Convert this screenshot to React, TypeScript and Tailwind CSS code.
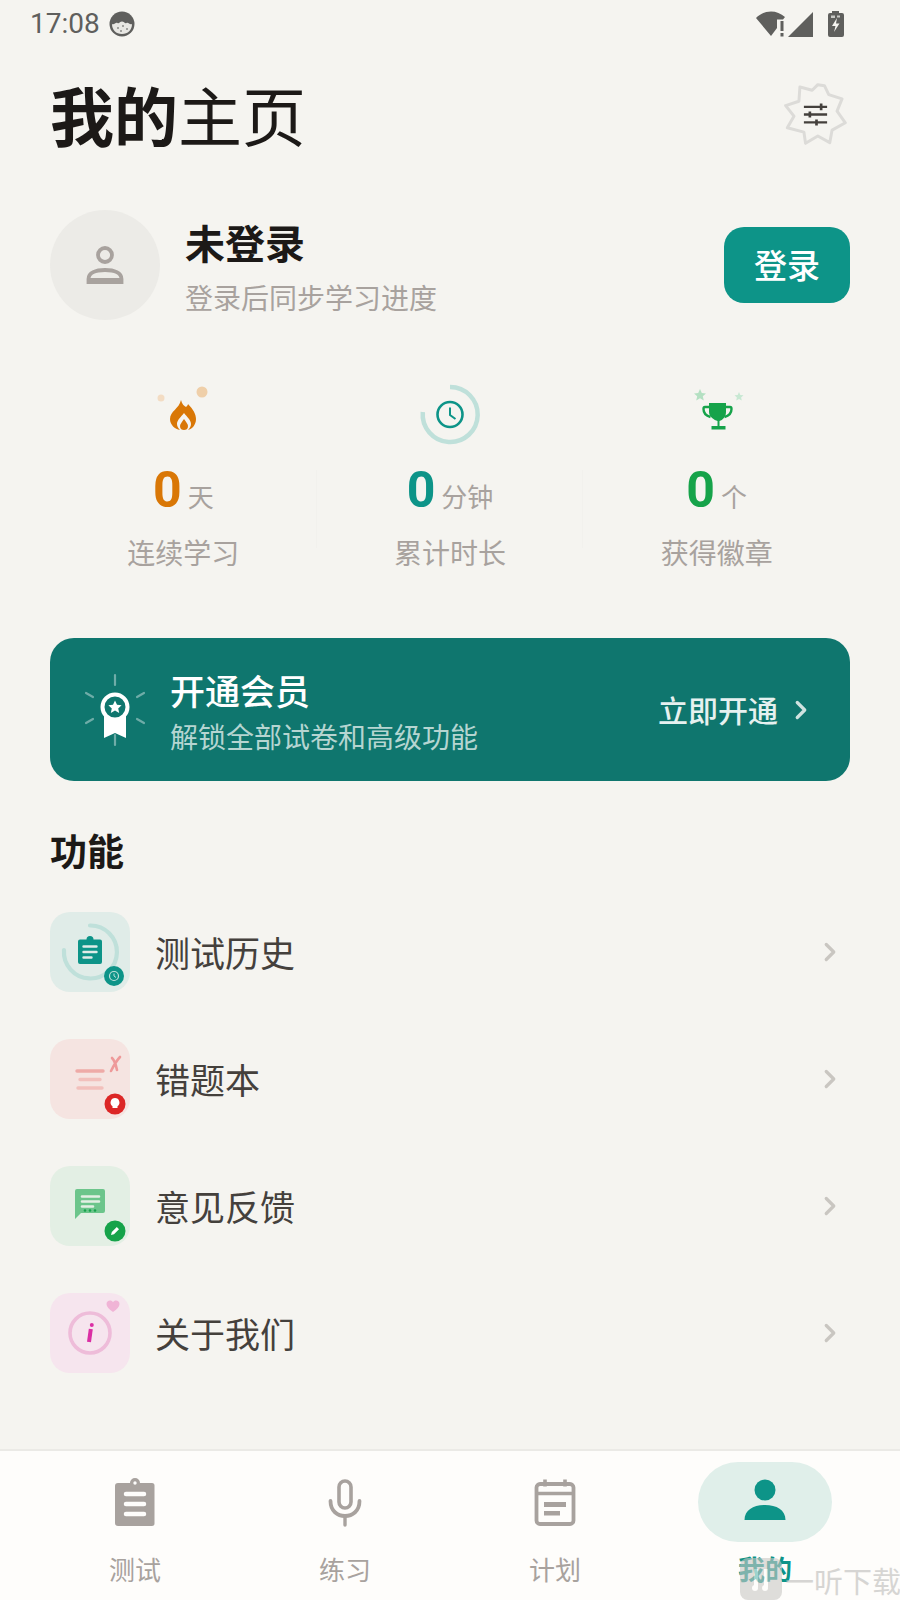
import React from 'react';
import { ChevronRight } from 'lucide-react';

const FlameIcon = () => (
  <svg width="80" height="72" viewBox="0 0 80 72">
    <circle cx="18" cy="20" r="3.5" fill="#f3dcc3" />
    <circle cx="59" cy="14" r="5.5" fill="#efcfa9" />
    <path
      fillRule="evenodd"
      d="M38 22c1 4 3 6 5 7 1-1 2-2 2-3 5 5 8 10 8 15 0 6-4 10-8 11 2-2 3-4 3-6 0-4-4-7-7-11-3 4-7 7-7 11 0 2 1 4 3 6-5-1-10-5-10-11 0-8 9-10 11-19z"
      fill="#d97706"
    />
    <path d="M41 41c2 3 4 5 4 7 0 3-2 4-4 4s-4-1-4-4c0-2 2-4 4-7z" fill="#d97706" />
  </svg>
);

const ClockIcon = () => (
  <svg width="80" height="72" viewBox="0 0 80 72" fill="none">
    <path d="M40 9A27.5 27.5 0 1 1 12.800 34" stroke="#bfe0da" strokeWidth="4.5" />
    <circle cx="40" cy="36.500" r="12.5" stroke="#0d9488" strokeWidth="2.6" />
    <path d="M40 29.500V37l5.5 4" stroke="#0d9488" strokeWidth="2" />
  </svg>
);

const TrophyIcon = () => (
  <svg width="80" height="72" viewBox="0 0 80 72" fill="none">
    <path d="M23 11l1.8 4 4.2.4-3.2 2.8 1 4.3-3.8-2.3-3.8 2.3 1-4.3-3.2-2.8 4.2-.4z" fill="#b4e0c2" />
    <path d="M62 14l1.3 3 3.2.3-2.4 2.1.7 3.2-2.8-1.7-2.8 1.7.7-3.2-2.4-2.1 3.2-.3z" fill="#c8e8d3" />
    <path d="M32 25h17v9c0 5-3.500 8-6.500 9v5h6v3.500h-14V48h6v-5c-3-1-8.500-4-8.500-9z" fill="#16a34a" />
    <path d="M32 29h-4c-1 0-1.500 1-1.500 2 0 4 3 7 7 8M49 29h4c1 0 1.500 1 1.500 2 0 4-3 7-7 8" stroke="#16a34a" strokeWidth="2.4" />
  </svg>
);

const stats = [
  { icon: FlameIcon, value: '0', unit: '天', label: '连续学习', color: 'text-[#d97706]' },
  { icon: ClockIcon, value: '0', unit: '分钟', label: '累计时长', color: 'text-[#0d9488]' },
  { icon: TrophyIcon, value: '0', unit: '个', label: '获得徽章', color: 'text-[#16a34a]' },
];

const HistoryTile = () => (
  <svg width="80" height="80" viewBox="0 0 80 80" fill="none">
    <path d="M40 13.500A26.500 26.500 0 1 1 14 38" stroke="#bfe0da" strokeWidth="4.200" strokeLinecap="round" />
    <path d="M30 27.500h6.500a3.500 3.500 0 0 1 7 0H50a2 2 0 0 1 2 2V50a2 2 0 0 1-2 2H30a2 2 0 0 1-2-2V29.500a2 2 0 0 1 2-2z" fill="#0d9488" />
    <path d="M33.500 34.500h13M33.500 40h13M33.500 45.500h8" stroke="#e0ece8" strokeWidth="2.400" strokeLinecap="round" />
    <circle cx="64" cy="64" r="10" fill="#0d9488" />
    <circle cx="64" cy="64" r="4.500" stroke="#bfe0da" strokeWidth="1.200" />
    <path d="M64 61.500V64l2 1.500" stroke="#bfe0da" strokeWidth="1" />
  </svg>
);

const WrongTile = () => (
  <svg width="80" height="80" viewBox="0 0 80 80" fill="none">
    <path d="M27 32h26" stroke="#eeaaa7" strokeWidth="3.400" strokeLinecap="round" />
    <path d="M30 40.500h20M28 49h24" stroke="#f2c0bc" strokeWidth="3.400" strokeLinecap="round" />
    <path d="M62 19c3 3 4 7 5 12M70 18c-3 3-6 8-9 14" stroke="#ee9a9a" strokeWidth="2.600" strokeLinecap="round" />
    <circle cx="65" cy="65" r="10.500" fill="#dc2626" />
    <path d="M65 59a4.500 4.500 0 0 1 2.500 8.200V69h-5v-1.800A4.500 4.500 0 0 1 65 59z" fill="#fff" />
  </svg>
);

const FeedbackTile = () => (
  <svg width="80" height="80" viewBox="0 0 80 80" fill="none">
    <path d="M27 23h26a2 2 0 0 1 2 2v20a2 2 0 0 1-2 2H31l-6 6V25a2 2 0 0 1 2-2z" fill="#6cc58b" />
    <path d="M32 30.500h17M32 35.500h17M32 40.500h11" stroke="#e3efe4" strokeWidth="2.600" strokeLinecap="round" />
    <circle cx="35" cy="44.500" r="1.300" fill="#16a34a" />
    <circle cx="40" cy="44.500" r="1.300" fill="#16a34a" />
    <circle cx="45" cy="44.500" r="1.300" fill="#16a34a" />
    <circle cx="65" cy="65" r="10.500" fill="#16a34a" />
    <path d="M61 69l.8-3 5-5 2.200 2.200-5 5z" fill="#fff" />
  </svg>
);

const AboutTile = () => (
  <svg width="80" height="80" viewBox="0 0 80 80" fill="none">
    <circle cx="40" cy="40" r="20" stroke="#eebcd9" strokeWidth="3.600" />
    <circle cx="41.800" cy="32" r="2" fill="#db2fa4" />
    <path d="M40.800 36L39 49" stroke="#db2fa4" strokeWidth="4" />
    <path d="M63 19c-4-3-6.500-5-6.500-8 0-2 1.500-3.500 3.500-3.500 1.300 0 2.400.6 3 1.700.6-1.100 1.700-1.700 3-1.700 2 0 3.500 1.500 3.500 3.500 0 3-2.500 5-6.500 8z" fill="#f0b4d6" />
  </svg>
);

const features = [
  { name: '测试历史', icon: HistoryTile, bg: 'bg-[#e0ece8]' },
  { name: '错题本', icon: WrongTile, bg: 'bg-[#f5e4e1]' },
  { name: '意见反馈', icon: FeedbackTile, bg: 'bg-[#e3efe4]' },
  { name: '关于我们', icon: AboutTile, bg: 'bg-[#f6e5ee]' },
];

const NavTest = () => (
  <svg width="50" height="50" viewBox="0 0 50 50">
    <path d="M8 6h12a5 5 0 0 1 10 0h12a2.500 2.500 0 0 1 2.500 2.500v38A2.500 2.500 0 0 1 42 49H8a3 3 0 0 1-3-3V9a3 3 0 0 1 3-3z" fill="#a8a29e" />
    <path d="M16 17h18M16 27h18M16 37h18" stroke="#fefdfb" strokeWidth="4.500" strokeLinecap="round" />
    <circle cx="25" cy="6" r="1.700" fill="#fefdfb" />
  </svg>
);

const NavPractice = () => (
  <svg width="50" height="50" viewBox="0 0 50 50" fill="none">
    <rect x="19" y="4" width="12" height="27" rx="6" stroke="#a8a29e" strokeWidth="3.600" />
    <path d="M10.500 24c0 10 7 15 14.500 15s14.500-5 14.500-15" stroke="#a8a29e" strokeWidth="3.800" strokeLinecap="round" />
    <path d="M25 39v9" stroke="#a8a29e" strokeWidth="3.400" strokeLinecap="round" />
  </svg>
);

const NavPlan = () => (
  <svg width="50" height="50" viewBox="0 0 50 50" fill="none">
    <rect x="6.500" y="7" width="37" height="40" rx="3.500" stroke="#a8a29e" strokeWidth="3.800" />
    <path d="M6 16.500h38" stroke="#a8a29e" strokeWidth="3.400" />
    <path d="M15 2.500v7M35 2.500v7" stroke="#a8a29e" strokeWidth="3.600" />
    <path d="M14 25h22v5H14zM14 34h16v4.500H14z" fill="#a8a29e" />
  </svg>
);

const NavMine = () => (
  <svg width="50" height="50" viewBox="0 0 50 50">
    <circle cx="25" cy="13" r="10.500" fill="#0d9488" />
    <path d="M4.500 43c0-10 9-15 20.500-15s20.500 5 20.500 15z" fill="#0d9488" />
  </svg>
);

const navItems = [
  { name: '测试', icon: NavTest, active: false },
  { name: '练习', icon: NavPractice, active: false },
  { name: '计划', icon: NavPlan, active: false },
  { name: '我的', icon: NavMine, active: true },
];

export default function App() {
  return (
    <div className="relative flex flex-col w-[900px] h-[1600px] overflow-hidden bg-[#f5f4f0] font-['Noto_Sans_CJK_SC',sans-serif]">
      {/* Status bar */}
      <div className="flex items-center justify-between h-[48px] pl-[30px] pr-[55px]">
        <div className="flex items-center gap-[9px]">
          <span className="font-['Roboto',sans-serif] text-[28px] leading-[48px] text-[#5f5f5d]">17:08</span>
          <svg width="26" height="26" viewBox="0 0 26 26">
            <circle cx="13" cy="13" r="12.500" fill="#5f5f5d" />
            <path d="M3 13c2.500 1 3.500-2 5.500-1 1.500 1 2.500-1.500 4.500-1.500s3 2.500 4.500 1.500c2-1 3 2 5.500 1 0 6-4 10-10 10S3 19 3 13z" fill="#e8e7e3" />
            <circle cx="9" cy="17" r="1" fill="#8a8a87" />
            <circle cx="14" cy="15" r="1" fill="#8a8a87" />
            <circle cx="18" cy="18" r="1" fill="#8a8a87" />
            <circle cx="12" cy="20" r="1" fill="#8a8a87" />
          </svg>
        </div>
        <div className="flex items-center gap-[1px]">
          <svg width="31" height="26" viewBox="0 0 31 26">
            <path d="M0 7C4 3 9 .5 15 .5c5 0 10 2 14 5.500l-2 2.500h-6V17l-6 8z" fill="#5f5f5d" />
            <path d="M24.500 10h3v10h-3zM24.500 22h3v3.500h-3z" fill="#5f5f5d" />
          </svg>
          <svg width="25" height="25" viewBox="0 0 25 25">
            <path d="M25 0v25H0z" fill="#5f5f5d" />
          </svg>
          <svg width="18" height="26" viewBox="0 0 18 26" className="ml-[13px]">
            <path d="M5 0h7v2h3a2 2 0 0 1 2 2v20a2 2 0 0 1-2 2H3a2 2 0 0 1-2-2V4a2 2 0 0 1 2-2h2z" fill="#5f5f5d" />
            <path d="M10 7l-5 8h3.500L7 21l5.500-8.500H9z" fill="#f5f4f0" />
            <path d="M4 4.500h4v2.500H4zM10 4.500h3v2H10z" fill="#c9c9c6" />
          </svg>
        </div>
      </div>

      {/* Title */}
      <div className="flex items-center justify-between mt-[21px] pl-[50px] pr-[53px]">
        <h1 className="text-[64px] leading-[88px] text-[#1c1917] font-normal">
          <span className="font-bold">我的</span>
          <span>主页</span>
        </h1>
        <svg width="63" height="62" viewBox="130 250 190 187" fill="none" className="mt-[2px]">
          <path
            d="M178 262l37 10 17-17 20 3 13 27 40 13-15 37 25 35-40 22-7 38-36-20-37 22-5-34-50-13 20-35-25-32 40-13z"
            stroke="#dcdbd8"
            strokeWidth="9"
            strokeLinejoin="round"
          />
          <path d="M190 322h70M190 345h70M190 369h70" stroke="#44403c" strokeWidth="7" />
          <path d="M242 312v20M208 336v18M228 360v18" stroke="#44403c" strokeWidth="8" />
        </svg>
      </div>

      {/* Profile */}
      <div className="flex items-center mt-[53px] pl-[50px] pr-[50px]">
        <div className="flex items-center justify-center w-[110px] h-[110px] rounded-full bg-[#ecebe7]">
          <svg width="40" height="40" viewBox="0 0 40 40" fill="none">
            <circle cx="20" cy="10" r="7" stroke="#a8a29e" strokeWidth="3.800" />
            <path d="M3.500 37v-3c0-6 7-9 16.500-9s16.500 3 16.500 9v3z" stroke="#a8a29e" strokeWidth="3.800" />
            <path d="M3 33h34v5H3z" fill="#a8a29e" />
          </svg>
        </div>
        <div className="flex-1 ml-[25px]">
          <div className="text-[40px] leading-[58px] font-bold text-[#1c1917]">未登录</div>
          <div className="mt-[6px] text-[28px] leading-[40px] text-[#a8a29e]">登录后同步学习进度</div>
        </div>
        <button className="w-[126px] h-[76px] rounded-[20px] bg-[#0d9488] text-[33px] font-medium text-white">登录</button>
      </div>

      {/* Stats */}
      <div className="grid grid-cols-3 mt-[58px] mx-[50px]">
        {stats.map((stat, i) => (
          <div key={stat.label} className="relative flex flex-col items-center">
            <stat.icon />
            <div className="flex items-baseline gap-[6px] mt-[8px] h-[64px]">
              <span className={`font-['Roboto',sans-serif] text-[50px] leading-[64px] font-bold ${stat.color}`}>{stat.value}</span>
              <span className="text-[26px] leading-[64px] text-[#a8a29e]">{stat.unit}</span>
            </div>
            <div className="mt-[10px] text-[28px] leading-[40px] text-[#a8a29e]">{stat.label}</div>
            {i < 2 && <div className="absolute right-0 top-[92px] w-px h-[78px] bg-[#f2f1ed]" />}
          </div>
        ))}
      </div>

      {/* Member banner */}
      <div className="flex items-center h-[143px] mt-[66px] mx-[50px] pl-[30px] pr-[34px] rounded-[24px] bg-[#0f766e]">
        <svg width="70" height="80" viewBox="0 0 70 80" fill="none">
          <path d="M35 5v10M35 65v10M6 23l7 4M64 23l-7 4M6 53l7-4M64 53l-7-4" stroke="#ffffff" strokeOpacity="0.4" strokeWidth="2.200" strokeLinecap="round" />
          <path d="M24 44h22v24l-11-5-11 5z" fill="#fff" />
          <circle cx="35" cy="37" r="12.500" fill="#0f766e" stroke="#fff" strokeWidth="4" />
          <path d="M35 30.500l2 4.300 4.600.5-3.400 3.100 1 4.600-4.200-2.400-4.200 2.400 1-4.600-3.400-3.100 4.600-.5z" fill="#fff" />
        </svg>
        <div className="flex-1 ml-[20px]">
          <div className="text-[35px] leading-[50px] font-medium text-white">开通会员</div>
          <div className="mt-[2px] text-[28px] leading-[38px] text-[#b5d5d1]">解锁全部试卷和高级功能</div>
        </div>
        <span className="text-[30px] font-medium text-[#e6f1f0]">立即开通</span>
        <ChevronRight size={30} strokeWidth={2.6} className="ml-[8px] text-[#cfe3e0]" />
      </div>

      {/* Features */}
      <h2 className="mt-[42px] ml-[50px] text-[37px] leading-[54px] font-bold text-[#1c1917]">功能</h2>
      <div className="flex flex-col gap-[47px] mt-[35px] mx-[50px]">
        {features.map((item) => (
          <div key={item.name} className="flex items-center">
            <div className={`w-[80px] h-[80px] rounded-[20px] ${item.bg}`}>
              <item.icon />
            </div>
            <span className="flex-1 ml-[25px] text-[35px] text-[#44403c]">{item.name}</span>
            <ChevronRight size={30} strokeWidth={2.6} className="mr-[5px] text-[#c9c6c1]" />
          </div>
        ))}
      </div>

      {/* Bottom nav */}
      <nav className="absolute bottom-0 left-0 right-0 grid grid-cols-4 h-[151px] px-[30px] border-t-2 border-[#ebeae6] bg-[#fefdfb]">
        {navItems.map((item) => (
          <div key={item.name} className="flex flex-col items-center">
            <div className={`flex items-center justify-center w-[134px] h-[80px] mt-[11px] rounded-[40px] ${item.active ? 'bg-[#e0efea]' : ''}`}>
              <item.icon />
            </div>
            <span className={`mt-[7px] leading-[40px] ${item.active ? 'text-[27px] font-bold text-[#0d9488]' : 'text-[26px] text-[#a8a29e]'}`}>
              {item.name}
            </span>
          </div>
        ))}
      </nav>

      {/* Watermark */}
      <div className="absolute left-[740px] top-[1558px] flex items-end whitespace-nowrap opacity-60">
        <div className="flex items-center justify-center w-[42px] h-[42px] rounded-[8px] bg-[#c9c8c5]">
          <svg width="24" height="28" viewBox="0 0 24 28" fill="none">
            <path d="M7 4v18M17 4v18" stroke="#fefdfb" strokeWidth="4" />
            <circle cx="6" cy="23" r="3" fill="#fefdfb" />
            <circle cx="16" cy="23" r="3" fill="#fefdfb" />
          </svg>
        </div>
        <span className="ml-[3px] text-[29px] leading-[40px] text-[#bdbcb9]">一听下载</span>
      </div>
    </div>
  );
}
